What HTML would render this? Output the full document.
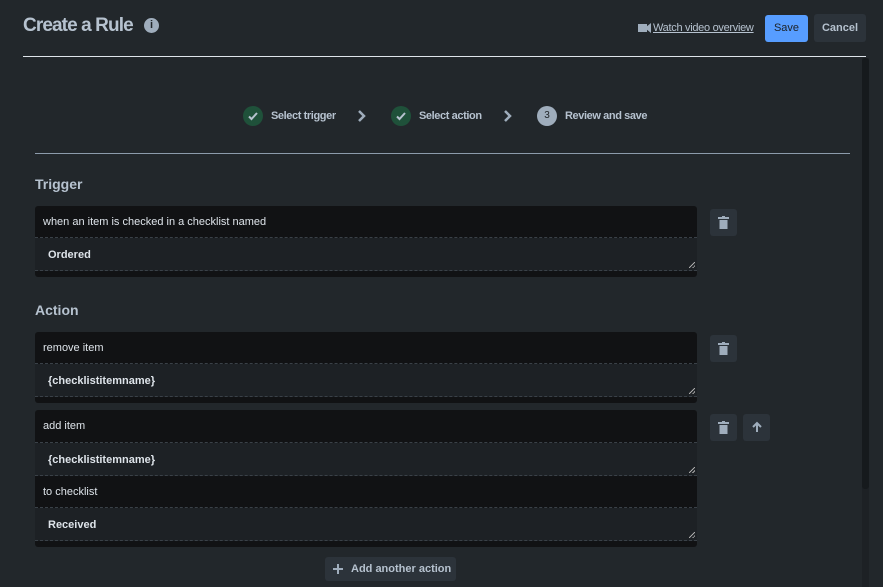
<!DOCTYPE html>
<html><head><style>
*{box-sizing:border-box;margin:0;padding:0}
body{width:883px;height:587px;overflow:hidden;background:#22272b;font-family:"Liberation Sans",sans-serif;color:#b6c2cf;position:relative}
.a{position:absolute}
.title{left:23px;top:15px;font-size:19px;font-weight:bold;color:#b6c2cf;letter-spacing:-0.9px}
.info{left:144px;top:18px;width:15px;height:15px;border-radius:50%;background:#9fadbc;color:#22272b;font-size:11px;font-weight:bold;text-align:center;line-height:15px}
.btn{border-radius:3px;font-size:12px;text-align:center}
.step{font-size:11px;color:#b6c2cf;letter-spacing:-0.4px;font-weight:bold}
.chk{width:20px;height:20px;border-radius:50%;background:#1f513a}
.sec{font-size:14px;font-weight:bold;color:#b6c2cf}
.box{background:#111214;border-radius:3px;left:35px;width:662px}
.row{height:32px;font-size:11px;color:#dee4ea;padding:10px 0 0 8px;border-bottom:1px dashed #3a4148}
.ta{height:33px;background:#1d2125;font-size:11px;font-weight:bold;color:#dee4ea;padding:11px 0 0 13px;border-bottom:1px dashed #3a4148;position:relative}
.ta:after{content:"";position:absolute;right:2px;bottom:2px;width:6px;height:6px;background:linear-gradient(135deg,transparent 45%,#aaa 45%,#aaa 55%,transparent 55%,transparent 75%,#aaa 75%,#aaa 85%,transparent 85%)}
.ib{width:27px;height:27px;background:#2c333a;border-radius:3px}
</style></head><body>
<div class="a title">Create a Rule</div>
<div class="a info">i</div>
<div class="a" style="left:638px;top:24px;width:9px;height:8px;background:#9fadbc"></div>
<div class="a" style="left:646px;top:23px;width:5px;height:10px;background:#9fadbc;clip-path:polygon(0 40%,100% 0,100% 100%,0 60%)"></div>
<div class="a" style="left:653px;top:22px;font-size:11px;text-decoration:underline;color:#b6c2cf;letter-spacing:-0.3px">Watch video overview</div>
<div class="a btn" style="left:765px;top:15px;width:43px;height:27px;background:#579dff;color:#1d2125;line-height:27px;font-size:11px">Save</div>
<div class="a btn" style="left:814px;top:14px;width:52px;height:28px;background:#2c333a;color:#b6c2cf;line-height:28px;font-weight:bold;font-size:11px">Cancel</div>
<div class="a" style="left:23px;top:56px;width:843px;height:1px;background:#dee4ea"></div>
<div class="a" style="left:862px;top:58px;width:7px;height:529px;background:#1d2125"></div>
<div class="a" style="left:862px;top:58px;width:7px;height:431px;background:#161a1d;border-radius:3px"></div>

<div class="a chk" style="left:243px;top:106px"></div>
<svg class="a" style="left:247px;top:110px" width="12" height="12" viewBox="0 0 12 12"><path d="M2 6.5l2.5 2.5L10 3" stroke="#b6c2cf" stroke-width="2" fill="none"/></svg>
<div class="a step" style="left:271px;top:110px">Select trigger</div>
<svg class="a" style="left:356px;top:109px" width="10" height="14"><path d="M3 2l5 5-5 5" stroke="#9fadbc" stroke-width="2.5" fill="none"/></svg>
<div class="a chk" style="left:391px;top:106px"></div>
<svg class="a" style="left:395px;top:110px" width="12" height="12" viewBox="0 0 12 12"><path d="M2 6.5l2.5 2.5L10 3" stroke="#b6c2cf" stroke-width="2" fill="none"/></svg>
<div class="a step" style="left:419px;top:110px">Select action</div>
<svg class="a" style="left:502px;top:109px" width="10" height="14"><path d="M3 2l5 5-5 5" stroke="#9fadbc" stroke-width="2.5" fill="none"/></svg>
<div class="a" style="left:537px;top:106px;width:20px;height:20px;border-radius:50%;background:#9fadbc;color:#22272b;font-size:10px;text-align:center;line-height:20px">3</div>
<div class="a step" style="left:565px;top:110px">Review and save</div>
<div class="a" style="left:35px;top:153px;width:815px;height:1px;background:#8c9bab"></div>

<div class="a sec" style="left:35px;top:176px">Trigger</div>
<div class="a box" style="top:206px;height:71px"><div class="row">when an item is checked in a checklist named</div><div class="ta">Ordered</div></div>
<div class="a ib" style="left:710px;top:209px"></div>

<div class="a sec" style="left:35px;top:302px">Action</div>
<div class="a box" style="top:332px;height:71px"><div class="row">remove item</div><div class="ta">{checklistitemname}</div></div>
<div class="a ib" style="left:710px;top:335px"></div>
<div class="a box" style="top:410px;height:137px"><div class="row" style="height:33px">add item</div><div class="ta">{checklistitemname}</div><div class="row">to checklist</div><div class="ta">Received</div></div>
<div class="a ib" style="left:710px;top:414px"></div>
<div class="a ib" style="left:743px;top:414px"></div>
<svg class="a" style="left:750px;top:420px" width="14" height="14"><path d="M7 12V3M3 7l4-4 4 4" stroke="#9fadbc" stroke-width="2" fill="none"/></svg>

<div class="a" style="left:325px;top:557px;width:131px;height:24px;background:#2c333a;border-radius:3px;font-size:11px;font-weight:bold;color:#b6c2cf;padding:6px 0 0 26px">Add another action</div>
<div class="a" style="left:333px;top:568px;width:10px;height:2px;background:#9fadbc"></div>
<div class="a" style="left:337px;top:564px;width:2px;height:10px;background:#9fadbc"></div>

<svg class="a" style="left:718px;top:216px" width="11" height="13"><rect x="0" y="1" width="11" height="2" fill="#9fadbc"/><rect x="4" y="0" width="3" height="2" fill="#9fadbc"/><rect x="1.5" y="4" width="8" height="9" fill="#9fadbc"/></svg>
<svg class="a" style="left:718px;top:342px" width="11" height="13"><rect x="0" y="1" width="11" height="2" fill="#9fadbc"/><rect x="4" y="0" width="3" height="2" fill="#9fadbc"/><rect x="1.5" y="4" width="8" height="9" fill="#9fadbc"/></svg>
<svg class="a" style="left:718px;top:421px" width="11" height="13"><rect x="0" y="1" width="11" height="2" fill="#9fadbc"/><rect x="4" y="0" width="3" height="2" fill="#9fadbc"/><rect x="1.5" y="4" width="8" height="9" fill="#9fadbc"/></svg>
</body></html>
